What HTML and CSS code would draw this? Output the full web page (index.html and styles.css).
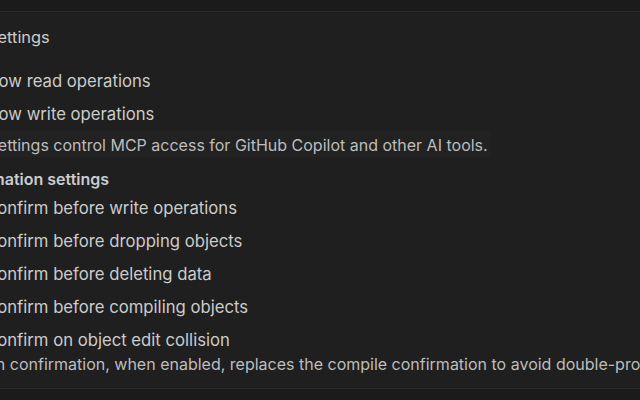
FILE: index.html
```html
<!DOCTYPE html>
<html lang="en">
<head>
<meta charset="utf-8">
<title>MCP Settings</title>
<link rel="stylesheet" href="styles.css">
</head>
<body>
<div class="top-strip"></div>
<main class="panel">
  <div class="title">Settings</div>
  <label class="row mcp"><span class="box"></span><span class="label">Allow read operations</span></label>
  <label class="row mcp"><span class="box"></span><span class="label">Allow write operations</span></label>
  <p class="desc first">These settings control MCP access for GitHub Copilot and other AI tools.</p>
  <div class="section-head">Confirmation settings</div>
  <label class="row conf"><span class="box"></span><span class="label">Confirm before write operations</span></label>
  <label class="row conf"><span class="box"></span><span class="label">Confirm before dropping objects</span></label>
  <label class="row conf"><span class="box"></span><span class="label">Confirm before deleting data</span></label>
  <label class="row conf"><span class="box"></span><span class="label">Confirm before compiling objects</span></label>
  <label class="row conf"><span class="box"></span><span class="label">Confirm on object edit collision</span></label>
  <p class="desc last">Collision confirmation, when enabled, replaces the compile confirmation to avoid double-prompting.</p>
</main>
<div class="bottom-strip"></div>
</body>
</html>
```
FILE: styles.css
```css
html, body {
  margin: 0;
  height: 100%;
  background: #1f1f1f;
  overflow: hidden;
}
body {
  font-family: Inter, "Noto Sans", sans-serif;
  color: #cccccc;
  display: flex;
  flex-direction: column;
}
.top-strip {
  height: 11px;
  flex: none;
  background: #1b1b1b;
  border-bottom: 1px solid #2b2b2b;
}
.panel {
  flex: none;
  display: flex;
  flex-direction: column;
  align-items: flex-start;
  white-space: nowrap;
  margin-left: -120px;
}
.title {
  font-size: 16.4px;
  line-height: 24px;
  margin-top: 13px;
  padding-left: 107px;
}
.row {
  display: flex;
  align-items: center;
  gap: 8px;
  height: 24px;
  margin-top: 9px;
  font-size: 16.7px;
}
.row.mcp { padding-left: 75px; }
.row.conf { padding-left: 81px; }
.row .box {
  width: 16px;
  height: 16px;
  border-radius: 3px;
  background: #313131;
  border: 1px solid #3c3c3c;
  box-sizing: border-box;
}
.mcp:first-of-type { margin-top: 20px; }
.desc {
  margin: 0;
  font-size: 16px;
  color: #bdbdbd;
}
.desc.first {
  margin-top: 5px;
  line-height: 23px;
  padding: 3px 3px 0 58px;
  background: #222222;
}
.section-head {
  font-size: 16px;
  font-weight: 600;
  line-height: 24px;
  margin-top: 10px;
  padding-left: 62px;
}
.section-head + .row { margin-top: 5px; }
.desc.last {
  line-height: 20px;
  margin-top: 2px;
  padding-left: 61px;
}
.bottom-strip {
  flex: 1;
  margin-top: 14px;
  background: #1b1b1b;
  border-top: 1px solid #2b2b2b;
}
```
